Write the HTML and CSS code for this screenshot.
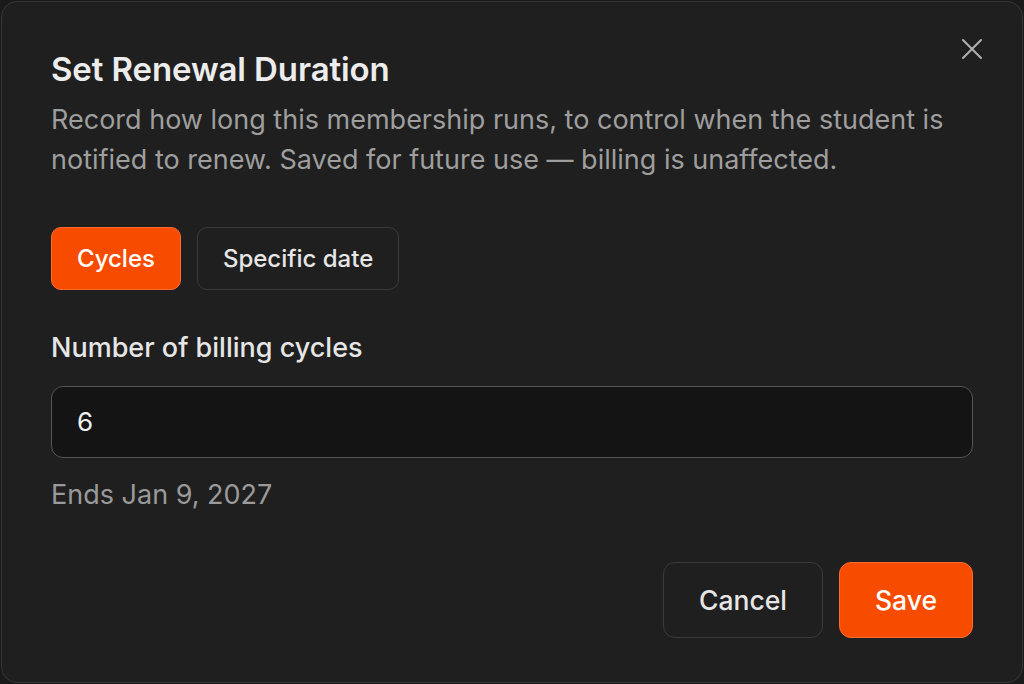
FILE: index.html
```html
<!DOCTYPE html>
<html lang="en">
<head>
<meta charset="utf-8">
<title>Set Renewal Duration</title>
<link rel="stylesheet" href="styles.css">
</head>
<body>
<div class="dialog">
  <button class="close" aria-label="Close">
    <svg viewBox="0 0 24 24" width="24" height="24"><path d="M3 3L21 21M21 3L3 21" stroke="currentColor" stroke-width="2" stroke-linecap="round" fill="none"/></svg>
  </button>
  <h1 class="title">Set Renewal Duration</h1>
  <p class="desc">Record how long this membership runs, to control when the student is notified to renew. Saved for future use — billing is unaffected.</p>
  <div class="toggle">
    <button class="seg seg-active">Cycles</button>
    <button class="seg">Specific date</button>
  </div>
  <label class="label" for="cycles">Number of billing cycles</label>
  <div class="input" id="cycles">6</div>
  <p class="hint">Ends Jan 9, 2027</p>
  <div class="footer">
    <button class="btn btn-ghost">Cancel</button>
    <button class="btn btn-primary">Save</button>
  </div>
</div>
</body>
</html>
```
FILE: styles.css
```css
html, body {
  margin: 0;
  padding: 0;
  background: #1a1a1a;
}
body {
  width: 1024px;
  height: 684px;
  padding: 1px;
  box-sizing: border-box;
  font-family: Inter, "Noto Sans", sans-serif;
}
.dialog {
  position: relative;
  box-sizing: border-box;
  width: 1022px;
  height: 682px;
  background: #1f1f1f;
  border: 1px solid #363636;
  border-radius: 16px;
  padding: 44px 49px 0 49px;
  display: flex;
  flex-direction: column;
}
.close {
  position: absolute;
  top: 35px;
  right: 38px;
  width: 24px;
  height: 24px;
  padding: 0;
  background: none;
  border: 0;
  color: #b0b0b0;
}
.close svg { display: block; }
.title {
  margin: 0;
  font-size: 33px;
  line-height: 46px;
  font-weight: 600;
  color: #ececec;
  letter-spacing: -0.1px;
}
.desc {
  margin: 8px 0 0;
  font-size: 27px;
  line-height: 40px;
  color: #9e9e9e;
}
.toggle {
  display: flex;
  gap: 16px;
  margin-top: 47px;
}
.seg {
  height: 63px;
  padding: 0 25px;
  border-radius: 10px;
  border: 1.5px solid #3a3a3a;
  background: #1f1f1f;
  color: #e6e6e6;
  font-family: inherit;
  font-size: 24px;
  font-weight: 500;
}
.seg-active {
  background: #f74b00;
  border-color: #ff6d2e;
  color: #ffffff;
}
.label {
  margin-top: 41px;
  font-size: 27px;
  line-height: 34px;
  font-weight: 500;
  color: #e6e6e6;
}
.input {
  margin-top: 21px;
  height: 72px;
  box-sizing: border-box;
  border: 1.5px solid #555;
  border-radius: 12px;
  background: #141414;
  color: #f0f0f0;
  font-size: 26px;
  line-height: 69px;
  padding: 0 25px;
}
.hint {
  margin: 20px 0 0;
  font-size: 27px;
  line-height: 34px;
  color: #9a9a9a;
}
.footer {
  display: flex;
  justify-content: flex-end;
  gap: 16px;
  margin-top: 50px;
}
.btn {
  height: 76px;
  border-radius: 12px;
  font-family: inherit;
  font-size: 26.5px;
  font-weight: 500;
}
.btn-ghost {
  width: 160px;
  background: #1f1f1f;
  border: 1.5px solid #3a3a3a;
  color: #e6e6e6;
}
.btn-primary {
  width: 134px;
  background: #f74b00;
  border: 1.5px solid #ff6d2e;
  color: #fff;
}
```
